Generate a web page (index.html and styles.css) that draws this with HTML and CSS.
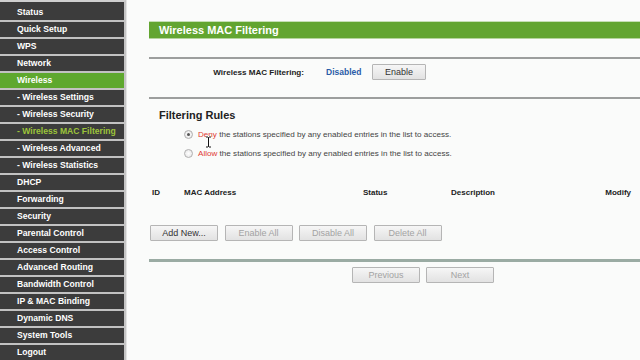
FILE: index.html
```html
<!DOCTYPE html>
<html lang="en">
<head>
    <meta charset="UTF-8">
    <meta name="viewport" content="width=device-width, initial-scale=1.0">
    <title>Wireless MAC Filtering</title>
    <link rel="stylesheet" href="styles.css">
</head>
<body>
    <div class="sidebar">
        <div class="menu-item">Status</div>
        <div class="menu-item">Quick Setup</div>
        <div class="menu-item">WPS</div>
        <div class="menu-item">Network</div>
        <div class="menu-item open">Wireless</div>
        <div class="menu-item">- Wireless Settings</div>
        <div class="menu-item">- Wireless Security</div>
        <div class="menu-item current">- Wireless MAC Filtering</div>
        <div class="menu-item">- Wireless Advanced</div>
        <div class="menu-item">- Wireless Statistics</div>
        <div class="menu-item">DHCP</div>
        <div class="menu-item">Forwarding</div>
        <div class="menu-item">Security</div>
        <div class="menu-item">Parental Control</div>
        <div class="menu-item">Access Control</div>
        <div class="menu-item">Advanced Routing</div>
        <div class="menu-item">Bandwidth Control</div>
        <div class="menu-item">IP &amp; MAC Binding</div>
        <div class="menu-item">Dynamic DNS</div>
        <div class="menu-item">System Tools</div>
        <div class="menu-item">Logout</div>
    </div>

    <div class="main">
        <div class="title-bar">Wireless MAC Filtering</div>
        <div class="rule"></div>

        <div class="status-row">
            <span class="status-label">Wireless MAC Filtering:</span>
            <span class="status-value">Disabled</span>
            <button class="btn btn-enable">Enable</button>
        </div>
        <div class="rule"></div>

        <h2 class="section-title">Filtering Rules</h2>
        <div class="radio-list">
            <div class="radio-row">
                <span class="radio checked"></span>
                <span><span class="warn">Deny</span> the stations specified by any enabled entries in the list to access.</span>
            </div>
            <div class="radio-row">
                <span class="radio"></span>
                <span><span class="warn">Allow</span> the stations specified by any enabled entries in the list to access.</span>
            </div>
        </div>

        <div class="table-head">
            <span>ID</span>
            <span>MAC Address</span>
            <span>Status</span>
            <span>Description</span>
            <span>Modify</span>
        </div>

        <div class="btn-row">
            <button class="btn btn-wide">Add New...</button>
            <button class="btn btn-wide" disabled>Enable All</button>
            <button class="btn btn-wide" disabled>Disable All</button>
            <button class="btn btn-wide" disabled>Delete All</button>
        </div>

        <div class="rule thick"></div>

        <div class="pager">
            <button class="btn btn-wide" disabled>Previous</button>
            <button class="btn btn-wide" disabled>Next</button>
        </div>

        <svg class="cursor" width="7" height="12" viewBox="0 0 7 12">
            <path d="M1 1h2l0.5 0.5L4 1h2M3.5 1.5v9M1 11h2l0.5-0.5L4 11h2" fill="none" stroke="#fff" stroke-width="2.2"/>
            <path d="M1 1h2l0.5 0.5L4 1h2M3.5 1.5v9M1 11h2l0.5-0.5L4 11h2" fill="none" stroke="#111" stroke-width="1"/>
        </svg>
    </div>
</body>
</html>
```

FILE: styles.css
```css
body {
    font-family: "Liberation Sans", Arial, sans-serif;
    background-color: #fafbfa;
    margin: 0;
    padding: 0;
    color: #333;
    display: flex;
    height: 100vh;
    overflow: hidden;
}
.sidebar {
    width: 124px;
    flex-shrink: 0;
    background-color: #3c3c3c;
    border-top: 2px solid #cfcfcf;
    border-right: 2px solid #c4c4c4;
    padding-top: 3px;
}
.menu-item {
    height: 15px;
    line-height: 15px;
    border-bottom: 2px solid #c2c2c2;
    padding-left: 17px;
    font-size: 8.6px;
    font-weight: bold;
    color: #fff;
    white-space: nowrap;
}
.menu-item.open {
    background-color: #5ea82e;
}
.menu-item.current {
    color: #9cc43a;
}
.main {
    position: relative;
    flex: 1;
    border-left: 1px solid #e4e4e4;
    padding: 21px 0 0 22px;
}
.title-bar {
    height: 16px;
    line-height: 16px;
    background-color: #62a530;
    border-top: 1px solid #c5dfb4;
    border-bottom: 1px solid #b4d49c;
    color: #fff;
    font-size: 11px;
    font-weight: bold;
    padding-left: 10px;
}
.rule {
    height: 0;
    border-top: 2px solid #9c9e9d;
    margin-top: 18px;
}
.status-row {
    display: flex;
    align-items: center;
    padding: 5px 0 17px;
}
.status-label {
    width: 155px;
    text-align: right;
    font-size: 8.1px;
    font-weight: bold;
    color: #222;
}
.status-value {
    margin-left: 22px;
    width: 46px;
    font-size: 8.5px;
    font-weight: bold;
    color: #2a5ca8;
}
.status-row + .rule {
    margin-top: 0;
}
.btn {
    height: 16px;
    padding: 0;
    font-family: "Liberation Sans", Arial, sans-serif;
    font-size: 9px;
    color: #333;
    background: linear-gradient(#f6f6f6, #e2e2e2);
    border: 1px solid #b5b5b5;
    border-radius: 1px;
}
.btn:disabled {
    color: #a3a3a3;
}
.btn-enable {
    width: 54px;
}
.btn-wide {
    width: 68px;
}
.section-title {
    margin: 10px 0 0;
    padding-left: 10px;
    font-size: 11px;
    line-height: 13px;
    color: #222;
}
.radio-list {
    margin-top: 3px;
    padding-left: 35px;
}
.radio-row {
    display: flex;
    align-items: center;
    height: 19px;
    font-size: 8.1px;
    color: #444;
}
.radio {
    width: 7px;
    height: 7px;
    border: 1px solid #b0b0b0;
    border-radius: 50%;
    background: radial-gradient(#fff, #e3e3e3);
    margin-right: 5px;
    position: relative;
}
.radio.checked::after {
    content: "";
    position: absolute;
    left: 2px;
    top: 2px;
    width: 3px;
    height: 3px;
    border-radius: 50%;
    background-color: #555;
}
.warn {
    color: #e03a33;
}
.table-head {
    display: grid;
    grid-template-columns: 32px 179px 88px 1fr auto;
    margin-top: 22px;
    padding: 0 9px 0 3px;
    height: 16px;
    line-height: 16px;
    font-size: 8px;
    font-weight: bold;
    color: #222;
}
.btn-row {
    display: flex;
    gap: 6.5px;
    margin: 24px 0 0 1px;
}
.rule.thick {
    border-top: 3px solid #9aaba3;
}
.pager {
    display: flex;
    gap: 6px;
    margin-top: 5px;
    padding-left: 203px;
}
.cursor {
    position: absolute;
    left: 78px;
    top: 136px;
}
```
